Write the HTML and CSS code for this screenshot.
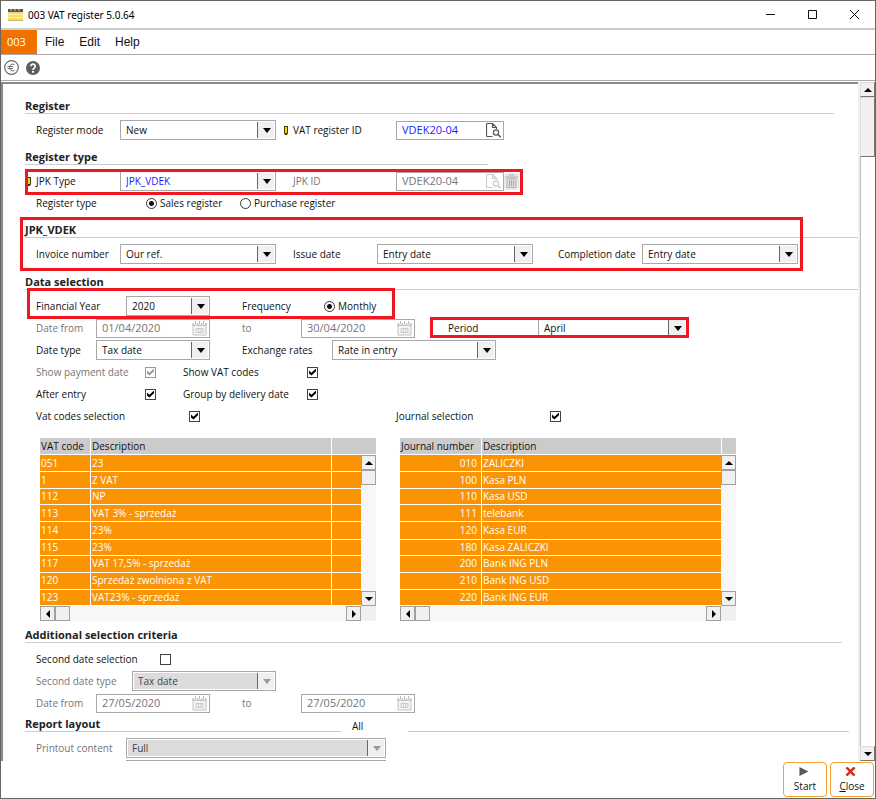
FILE: index.html
```
<!DOCTYPE html>
<html lang="en">
<head>
    <meta charset="utf-8">
    <title>003 VAT register 5.0.64</title>
    <link rel="stylesheet" href="styles.css">
</head>
<body>
    <!-- Shared icons -->
    <svg class="defs" width="0" height="0">
        <symbol id="i-calendar" viewBox="0 0 15 15">
            <path d="M1 2.500h13v11.500h-13z" fill="#f4f4f4" stroke="#c4c4c4"/>
            <path d="M.5 2h14v3h-14z" fill="#c4c4c4"/>
            <path d="M3.500 0v3.500M7.500 0v3.500M11.500 0v3.500" stroke="#fff" stroke-width="3"/>
            <path d="M3.500 0v3M7.500 0v3M11.500 0v3" stroke="#b8b8b8"/>
            <path d="M4 7.500h7v4h-7zM6.500 7.500v4M9 7.500v4" fill="none" stroke="#cacaca"/>
        </symbol>
        <symbol id="i-lookup" viewBox="0 0 15 15">
            <path d="M6.500 13.500h-5a1 1 0 0 1-1-1v-11a1 1 0 0 1 1-1h5l4 4v1.500M6.500 .5v4h4" fill="none" stroke="currentColor" stroke-width="1.200"/>
            <circle cx="10" cy="9.500" r="2.600" fill="none" stroke="currentColor" stroke-width="1.200"/>
            <path d="M12 11.500l2.700 2.700" stroke="currentColor" stroke-width="1.500"/>
        </symbol>
        <symbol id="i-pencil" viewBox="0 0 4 9">
            <path d="M0 0h4v7l-1 2h-2l-1-2z" fill="#3c3c00"/>
            <path d="M1 1h2v6H1z" fill="#e6dc00"/>
        </symbol>
    </svg>

    <div class="window">
        <header class="titlebar">
            <svg class="app-icon" width="15" height="12" viewBox="0 0 15 12">
                <path d="M0 0h15v12H0z" fill="#f8dc6a"/>
                <path d="M0 0h15v3H0z" fill="#555"/>
                <path d="M2 1h2M6 1h2M10 1h2" stroke="#cfcfcf"/>
                <path d="M0 5.500h15M0 8.500h15" stroke="#fdf0b4"/>
                <path d="M0 11.500h15" stroke="#cdbb6a"/>
            </svg>
            <span class="title">003 VAT register 5.0.64</span>
            <button class="win-btn" aria-label="Minimize"><svg width="11" height="11" viewBox="0 0 11 11"><path d="M1 5.500h9" stroke="#111"/></svg></button>
            <button class="win-btn" aria-label="Maximize"><svg width="11" height="11" viewBox="0 0 11 11"><path d="M1.500 1.500h8v8h-8z" fill="none" stroke="#111"/></svg></button>
            <button class="win-btn" aria-label="Close window"><svg width="11" height="11" viewBox="0 0 11 11"><path d="M1 1l9 9M10 1l-9 9" stroke="#111"/></svg></button>
        </header>

        <nav class="menubar">
            <span class="menu-code">003</span>
            <a href="#">File</a>
            <a href="#">Edit</a>
            <a href="#">Help</a>
        </nav>

        <div class="toolbar">
            <button aria-label="Currency">
                <svg width="15" height="15" viewBox="0 0 15 15"><circle cx="7.500" cy="7.500" r="6.800" fill="none" stroke="#6a6a6a" stroke-width="1.200"/><path d="M10.500 4.500a3.400 3.400 0 1 0 0 6M3.500 6.500h5.500M3.500 8.500h5.500" fill="none" stroke="#6a6a6a"/></svg>
            </button>
            <button aria-label="Help">
                <svg width="14" height="14" viewBox="0 0 14 14"><circle cx="7" cy="7" r="7" fill="#5e5e5e"/><path d="M4.800 5.300a2.200 2.200 0 1 1 3.300 1.900c-.8.5-1.100.8-1.100 1.700" fill="none" stroke="#fff" stroke-width="1.700"/><path d="M6 9.900h2v1.800H6z" fill="#fff"/></svg>
            </button>
        </div>

        <main class="panel">
            <form class="form">
                <section>
                    <h2 class="line-register">Register</h2>
                    <div class="row cols-register">
                        <label for="mode">Register mode</label>
                        <span class="select w-m"><select id="mode"><option>New</option></select></span>
                        <label for="vat-id"><svg class="pencil" width="4" height="9"><use href="#i-pencil"/></svg>VAT register ID</label>
                        <span class="field lookup"><input id="vat-id" class="blue" value="VDEK20-04"><button type="button" aria-label="Search register"><svg width="15" height="15"><use href="#i-lookup"/></svg></button></span>
                    </div>
                </section>

                <section>
                    <h2 class="line-type">Register type</h2>
                    <div class="row cols-register">
                        <label for="jpk-type"><svg class="pencil" width="4" height="9"><use href="#i-pencil"/></svg>JPK Type</label>
                        <span class="select w-m"><select id="jpk-type" class="blue"><option>JPK_VDEK</option></select></span>
                        <label class="off" for="jpk-id">JPK ID</label>
                        <span class="lookup-group">
                            <span class="field lookup off"><input id="jpk-id" value="VDEK20-04" disabled><button type="button" aria-label="Search JPK" disabled><svg width="15" height="15"><use href="#i-lookup"/></svg></button></span>
                            <button class="trash" type="button" aria-label="Delete" disabled><svg width="13" height="15" viewBox="0 0 13 15"><path d="M2 4.500h9v9h-9z" fill="#dcdcdc" stroke="#b4b4b4"/><path d="M0 3h13M4.500 2.500v-1.500h4v1.500" fill="none" stroke="#b4b4b4"/><path d="M4.500 6v6M6.500 6v6M8.500 6v6" stroke="#aaa"/></svg></button>
                        </span>
                        <span class="mark mark-jpk"></span>
                    </div>
                    <div class="row cols-kind">
                        <span>Register type</span>
                        <label class="radio"><input type="radio" name="kind" checked>Sales register</label>
                        <label class="radio"><input type="radio" name="kind">Purchase register</label>
                    </div>
                </section>

                <section class="marked">
                    <h2>JPK_VDEK</h2>
                    <div class="row cols-vdek">
                        <label for="invoice">Invoice number</label>
                        <span class="select w-m"><select id="invoice"><option>Our ref.</option></select></span>
                        <label for="issue">Issue date</label>
                        <span class="select w-m"><select id="issue"><option>Entry date</option></select></span>
                        <label for="completion">Completion date</label>
                        <span class="select w-m"><select id="completion"><option>Entry date</option></select></span>
                    </div>
                    <span class="mark mark-vdek"></span>
                </section>

                <section>
                    <h2>Data selection</h2>
                    <div class="row cols-year">
                        <label for="year">Financial Year</label>
                        <span class="select w-xs"><select id="year"><option>2020</option></select></span>
                        <span>Frequency</span>
                        <label class="radio"><input type="radio" name="freq" checked>Monthly</label>
                        <span class="mark mark-year"></span>
                    </div>
                    <div class="row cols-dates">
                        <label class="off" for="from">Date from</label>
                        <span class="field date off"><input id="from" value="01/04/2020" disabled><button type="button" aria-label="Pick start date" disabled><svg width="15" height="15"><use href="#i-calendar"/></svg></button></span>
                        <label class="off" for="until">to</label>
                        <span class="field date off"><input id="until" value="30/04/2020" disabled><button type="button" aria-label="Pick end date" disabled><svg width="15" height="15"><use href="#i-calendar"/></svg></button></span>
                        <label for="period">Period</label>
                        <span class="select"><select id="period"><option>April</option></select></span>
                        <span class="mark mark-period"></span>
                    </div>
                    <div class="row cols-rates">
                        <label for="date-type">Date type</label>
                        <span class="select w-s"><select id="date-type"><option>Tax date</option></select></span>
                        <label for="rates">Exchange rates</label>
                        <span class="select"><select id="rates"><option>Rate in entry</option></select></span>
                    </div>
                    <div class="row cols-checks">
                        <label class="off" for="show-pay">Show payment date</label>
                        <input id="show-pay" type="checkbox" checked disabled>
                        <label for="show-vat">Show VAT codes</label>
                        <input id="show-vat" type="checkbox" checked>
                    </div>
                    <div class="row cols-checks">
                        <label for="after">After entry</label>
                        <input id="after" type="checkbox" checked>
                        <label for="group">Group by delivery date</label>
                        <input id="group" type="checkbox" checked>
                    </div>
                    <div class="row cols-codes">
                        <label for="codes">Vat codes selection</label>
                        <input id="codes" type="checkbox" checked>
                        <label for="journals">Journal selection</label>
                        <input id="journals" type="checkbox" checked>
                    </div>

                    <div class="lists">
                        <div class="list">
                            <table class="codes">
                                <thead>
                                    <tr><th>VAT code</th><th>Description</th><th></th></tr>
                                </thead>
                                <tbody>
                                    <tr><td>051</td><td>23</td><td></td></tr>
                                    <tr><td>1</td><td>Z VAT</td><td></td></tr>
                                    <tr><td>112</td><td>NP</td><td></td></tr>
                                    <tr><td>113</td><td>VAT 3% - sprzedaż</td><td></td></tr>
                                    <tr><td>114</td><td>23%</td><td></td></tr>
                                    <tr><td>115</td><td>23%</td><td></td></tr>
                                    <tr><td>117</td><td>VAT 17,5% - sprzedaż</td><td></td></tr>
                                    <tr><td>120</td><td>Sprzedaż zwolniona z VAT</td><td></td></tr>
                                    <tr><td>123</td><td>VAT23% - sprzedaż</td><td></td></tr>
                                </tbody>
                            </table>
                            <span class="head-end"></span>
                            <div class="bar bar-v"><i class="btn up"></i><i class="btn"></i><i class="btn down last"></i></div>
                            <div class="bar bar-h"><i class="btn left"></i><i class="btn"></i><i class="btn right last"></i></div>
                            <span class="corner"></span>
                        </div>
                        <div class="list">
                            <table class="journals">
                                <thead>
                                    <tr><th>Journal number</th><th>Description</th></tr>
                                </thead>
                                <tbody>
                                    <tr><td>010</td><td>ZALICZKI</td></tr>
                                    <tr><td>100</td><td>Kasa PLN</td></tr>
                                    <tr><td>110</td><td>Kasa USD</td></tr>
                                    <tr><td>111</td><td>telebank</td></tr>
                                    <tr><td>120</td><td>Kasa EUR</td></tr>
                                    <tr><td>180</td><td>Kasa ZALICZKI</td></tr>
                                    <tr><td>200</td><td>Bank ING PLN</td></tr>
                                    <tr><td>210</td><td>Bank ING USD</td></tr>
                                    <tr><td>220</td><td>Bank ING EUR</td></tr>
                                </tbody>
                            </table>
                            <span class="head-end split"></span>
                            <div class="bar bar-v"><i class="btn up"></i><i class="btn"></i><i class="btn down last"></i></div>
                            <div class="bar bar-h"><i class="btn left"></i><i class="btn"></i><i class="btn right last"></i></div>
                            <span class="corner"></span>
                        </div>
                    </div>
                </section>

                <section class="near">
                    <h2 class="line-extra">Additional selection criteria</h2>
                    <div class="row cols-second">
                        <label for="second">Second date selection</label>
                        <input id="second" type="checkbox">
                    </div>
                    <div class="row cols-second-type">
                        <label class="off" for="second-type">Second date type</label>
                        <span class="select off"><select id="second-type" disabled><option>Tax date</option></select></span>
                    </div>
                    <div class="row cols-dates">
                        <label class="off" for="from2">Date from</label>
                        <span class="field date off"><input id="from2" value="27/05/2020" disabled><button type="button" aria-label="Pick second start date" disabled><svg width="15" height="15"><use href="#i-calendar"/></svg></button></span>
                        <label class="off" for="until2">to</label>
                        <span class="field date off"><input id="until2" value="27/05/2020" disabled><button type="button" aria-label="Pick second end date" disabled><svg width="15" height="15"><use href="#i-calendar"/></svg></button></span>
                    </div>
                </section>

                <section class="tight">
                    <div class="split-head">
                        <h2>Report layout</h2>
                        <span class="all">All</span>
                        <span class="rule"></span>
                    </div>
                    <div class="row cols-print">
                        <label class="off" for="print">Printout content</label>
                        <span class="select off"><select id="print" disabled><option>Full</option></select></span>
                    </div>
                    <div class="row cols-print">
                        <span></span>
                        <span class="select off"><select aria-label="Layout" disabled><option></option></select></span>
                    </div>
                </section>
            </form>

            <div class="scrollbar">
                <i class="cap up"></i>
                <i class="thumb"></i>
                <i class="cap down last"></i>
            </div>
        </main>

        <footer class="actions">
            <button type="button">
                <svg width="11" height="10" viewBox="0 0 11 10"><path d="M1 0l10 5-10 5z" fill="#5a5a5a"/></svg>
                <span>Start</span>
            </button>
            <button type="button">
                <svg width="11" height="10" viewBox="0 0 11 10"><path d="M1 .5l9 9M10 .5l-9 9" stroke="#c8321e" stroke-width="2.800"/></svg>
                <span><u>C</u>lose</span>
            </button>
        </footer>
    </div>
</body>
</html>
```
FILE: styles.css
```
* {
    box-sizing: border-box;
}
body {
    margin: 0;
    font-family: "Open Sans", "Noto Sans", sans-serif;
    font-size: 10px;
    line-height: 16px;
    color: #111;
    background: #fff;
}
button, input, select {
    font: inherit;
    color: inherit;
    margin: 0;
    padding: 0;
    border: none;
    background: none;
}
svg {
    display: block;
}
.defs {
    position: absolute;
}
.window {
    display: flex;
    flex-direction: column;
    height: 100vh;
    border: 1px solid #666;
}

/* Title, menu and toolbar */
.titlebar {
    display: flex;
    align-items: center;
    height: 29px;
    padding-left: 7px;
    border-bottom: 2px solid #ccc;
}
.title {
    flex: 1;
    margin-left: 5px;
    font-family: "Noto Sans", sans-serif;
    color: #000;
}
.win-btn {
    display: flex;
    justify-content: center;
    width: 42px;
}
.menubar {
    display: flex;
    align-items: center;
    gap: 15px;
    height: 25px;
    border-bottom: 1px solid #aaa;
}
.menubar a {
    font-family: "Liberation Sans", Arial, sans-serif;
    font-size: 12px;
    color: #111;
    text-decoration: none;
}
.menu-code {
    align-self: stretch;
    width: 36px;
    margin-right: -7px;
    padding-left: 6px;
    font-size: 11px;
    line-height: 24px;
    color: #fff;
    background: #f07000;
}
.toolbar {
    display: flex;
    align-items: center;
    gap: 7px;
    height: 26px;
    padding-left: 3px;
    border-bottom: 1px solid #aaa;
}

/* Scrolling form */
.panel {
    display: flex;
    flex: 1;
    min-height: 0;
    margin-top: 1px;
}
.form {
    flex: 1;
    min-width: 0;
    overflow: hidden;
    padding: 6px 0 0 22px;
    border-top: 2px solid #8a8a8a;
    border-left: 2px solid #8a8a8a;
}
section {
    margin-top: 8px;
}
.near {
    margin-top: 6px;
}
.tight {
    margin-top: 2px;
}
.marked {
    position: relative;
    padding-bottom: 1px;
}
h2 {
    height: 16px;
    margin: 0 0 5px;
    font-size: 11px;
    line-height: 15px;
    color: #222;
    border-bottom: 1px solid #ccc;
}
.line-register {
    margin-right: 24px;
}
.line-type {
    width: 463px;
}
.line-extra {
    margin-right: 16px;
}
.row {
    position: relative;
    display: grid;
    align-items: center;
    height: 22px;
    padding-left: 11px;
    white-space: nowrap;
}
.cols-register {
    grid-template-columns: 84px 173px 103px auto 1fr;
}
.cols-kind {
    grid-template-columns: 110px 94px auto 1fr;
}
.cols-vdek {
    grid-template-columns: 84px 173px 84px 181px 84px 156px;
}
.cols-year {
    grid-template-columns: 90px 116px 82px auto 1fr;
}
.cols-dates {
    grid-template-columns: 60px 146px 59px 147px 90px 149px;
}
.cols-rates {
    grid-template-columns: 60px 146px 90px 164px;
}
.cols-checks {
    grid-template-columns: 109px 38px 124px auto 1fr;
}
.cols-codes {
    grid-template-columns: 153px 207px 154px auto 1fr;
}
.cols-second {
    grid-template-columns: 124px 1fr;
}
.cols-second-type {
    grid-template-columns: 96px 144px;
}
.cols-print {
    grid-template-columns: 90px 260px;
}
.off {
    color: #757575;
}
.blue {
    color: #1a1aff;
}
.pencil {
    float: left;
    margin: 4px 5px 0 -9px;
}

/* Drop-downs */
.select {
    display: grid;
}
.w-m {
    width: 156px;
}
.w-s {
    width: 114px;
}
.w-xs {
    width: 84px;
}
.select select, .select::before, .select::after {
    grid-area: 1 / 1;
}
.select select {
    appearance: none;
    height: 20px;
    padding: 0 20px 1px 5px;
    border: 1px solid #a8a8a8;
    background: #fff;
    opacity: 1;
}
.select::before, .select::after {
    content: "";
    justify-self: end;
    z-index: 1;
    pointer-events: none;
}
.select::before {
    width: 16px;
    height: 16px;
    margin: 2px;
    border-left: 1px solid #666;
    background: #f0f0f0;
}
.select::after {
    align-self: center;
    margin-right: 5px;
    border: 4px solid transparent;
    border-top: 5px solid #000;
    border-bottom: none;
}
.select.off select {
    color: #444;
    background: #dcdcdc;
    box-shadow: inset 0 0 0 1px #fff;
}
.select.off::after {
    border-top-color: #999;
}

/* Text boxes */
.field {
    display: flex;
    align-items: center;
    height: 19px;
    border: 1px solid #a8a8a8;
    background: #fff;
}
.field input {
    flex: 1;
    min-width: 0;
    padding-left: 5px;
    font-size: 11px;
}
.lookup {
    width: 108px;
    color: #555;
}
.lookup button {
    margin-right: 2px;
}
.lookup.off {
    color: #757575;
}
.lookup.off button {
    color: #ccc;
}
.date {
    width: 114px;
}
.date button {
    margin-right: 2px;
}
.lookup-group {
    display: flex;
    align-items: center;
}
.trash {
    padding: 1px;
    background: #e8e8e8;
    border-radius: 3px;
}

/* Radios and check boxes */
.radio {
    display: flex;
    align-items: center;
    gap: 3px;
}
.radio input {
    appearance: none;
    width: 11px;
    height: 11px;
    border: 1px solid #333;
    border-radius: 50%;
}
.radio input:checked {
    background: radial-gradient(circle, #111 2px, #fff 3px);
}
input[type="checkbox"] {
    appearance: none;
    display: grid;
    place-items: center;
    width: 11px;
    height: 11px;
    border: 1px solid #444;
}
input[type="checkbox"]:checked::after {
    content: "";
    width: 7px;
    height: 7px;
    background: #000;
    clip-path: polygon(0 30%, 35% 60%, 100% 0, 100% 40%, 35% 100%, 0 70%);
}
input[type="checkbox"]:disabled {
    border-color: #999;
}
input[type="checkbox"]:disabled::after {
    background: #999;
}

/* Highlight frames */
.mark {
    position: absolute;
    border: 3px solid #f01820;
    pointer-events: none;
    z-index: 2;
}
.mark-jpk {
    top: -1px;
    left: 0;
    width: 498px;
    height: 26px;
}
.mark-vdek {
    top: -5px;
    left: -5px;
    width: 783px;
    height: 54px;
}
.mark-year {
    top: -7px;
    left: 2px;
    width: 368px;
    height: 31px;
}
.mark-period {
    top: 0;
    left: 405px;
    width: 259px;
    height: 21px;
}

/* Code and journal lists */
.lists {
    display: flex;
    gap: 24px;
    margin-top: 11px;
    padding-left: 15px;
}
.list {
    display: grid;
    grid-template-columns: 321px 15px;
    grid-template-rows: 17px 151px 15px;
}
table {
    grid-row: 1 / 3;
    table-layout: fixed;
    width: 100%;
    border-spacing: 0;
    color: #fff;
    background: #fa9405;
}
th, td {
    height: 17px;
    padding: 0 0 0 1px;
    line-height: 15px;
    text-align: left;
    border: 0 solid #fff;
    white-space: nowrap;
}
th {
    font-weight: normal;
    color: #111;
    background: #cbcbcb;
    border-bottom-width: 1px;
}
td {
    border-bottom-width: 1px;
}
tr:nth-child(3n) td {
    height: 16px;
}
th:first-child, td:first-child {
    border-right-width: 1px;
}
.codes th:nth-child(2), .codes td:nth-child(2) {
    border-right-width: 1px;
}
.codes th:first-child {
    width: 51px;
}
.codes th:last-child {
    width: 29px;
}
.journals th:first-child {
    width: 82px;
}
.journals td:first-child {
    padding-right: 4px;
    text-align: right;
}
.head-end {
    background: #cbcbcb;
    border-bottom: 1px solid #fff;
}
.split {
    border-left: 1px solid #fff;
}
.bar {
    display: flex;
    background: #f7f7f7;
}
.bar-v {
    flex-direction: column;
}
.corner {
    background: #f0f0f0;
}
.btn {
    display: grid;
    place-items: center;
    width: 15px;
    height: 15px;
    border: 1px solid #a0a0a0;
    background: #f0f0f0;
}
.up::after, .down::after, .left::after, .right::after {
    content: "";
    border: 4px solid transparent;
}
.up::after {
    border-top: none;
    border-bottom-color: #000;
}
.down::after {
    border-bottom: none;
    border-top-color: #000;
}
.left::after {
    border-left: none;
    border-right-color: #000;
}
.right::after {
    border-right: none;
    border-left-color: #000;
}
.bar-v .last, .scrollbar .last {
    margin-top: auto;
}
.bar-h .last {
    margin-left: auto;
}

/* Heading with a gap in its rule */
.split-head {
    display: flex;
    margin-right: 9px;
}
.split-head h2 {
    width: 316px;
}
.all {
    width: 67px;
    padding-left: 11px;
    line-height: 20px;
    height: 16px;
}
.rule {
    flex: 1;
    height: 16px;
    border-bottom: 1px solid #ccc;
}

/* Main scroll bar */
.scrollbar {
    display: flex;
    flex-direction: column;
    width: 17px;
    border-left: 2px solid #f0f0f0;
    background: linear-gradient(90deg, #bbb 1px, #fff 1px);
}
.cap, .thumb {
    border: 1px solid #ddd;
    border-right-color: #777;
    border-bottom-color: #777;
    background: #f0f0f0;
}
.cap {
    display: grid;
    place-items: center;
    height: 15px;
}
.thumb {
    height: 60px;
}

/* Bottom buttons */
.actions {
    display: flex;
    justify-content: flex-end;
    gap: 3px;
    padding: 1px 1px 1px;
}
.actions button {
    display: flex;
    flex-direction: column;
    align-items: center;
    width: 44px;
    height: 35px;
    padding-top: 4px;
    border: 1px solid #f5a030;
    border-radius: 4px;
    line-height: 20px;
    color: #111;
}
.actions svg {
    margin-right: 4px;
}
```
